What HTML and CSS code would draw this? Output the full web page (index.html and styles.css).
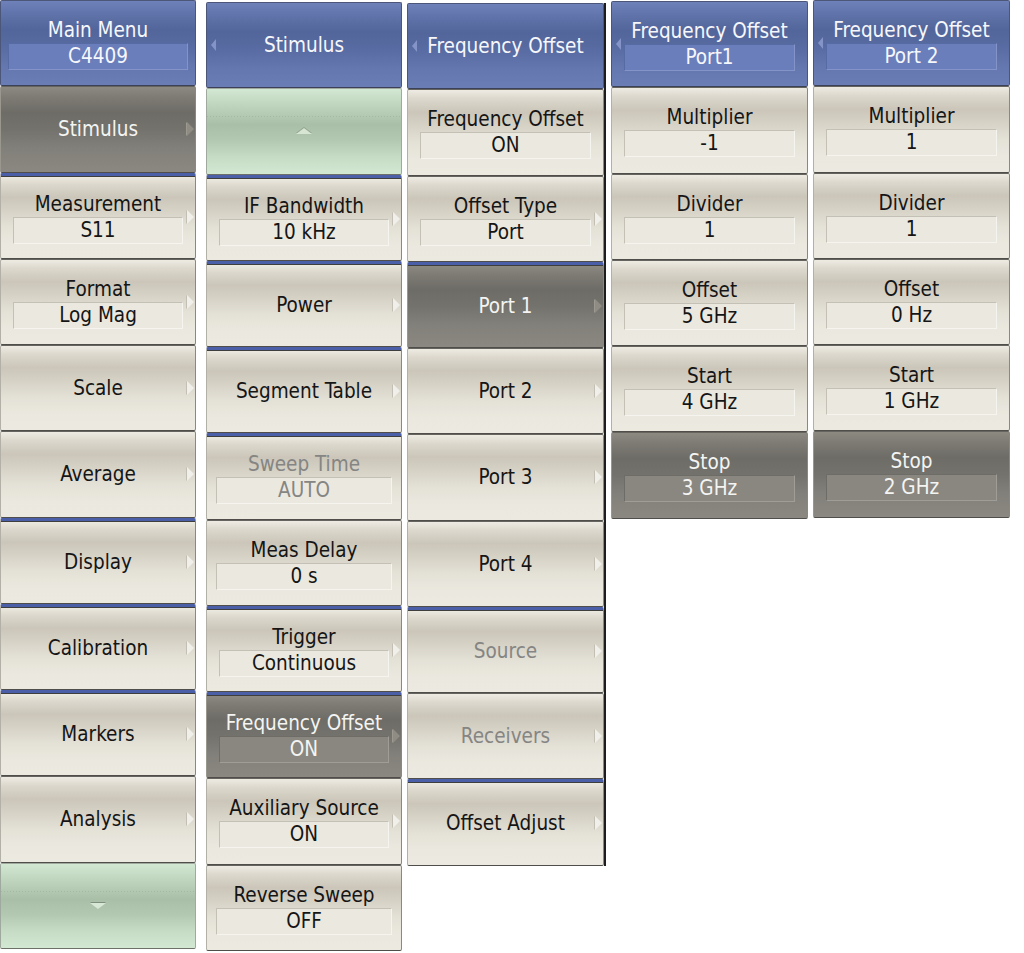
FILE: index.html
```html
<!DOCTYPE html>
<html>
<head>
<meta charset="utf-8">
<title>Menu</title>
<link rel="stylesheet" href="styles.css">
</head>
<body>
<div class="screen">
  <div class="col c1">
    <div class="btn hdr tight"><div class="body"><div class="lbl">Main Menu</div><div class="val">C4409</div></div></div>
    <div class="btn dark"><div class="body"><div class="lbl">Stimulus</div></div><span class="ra"></span></div>
    <div class="btn sep"><div class="body"><div class="lbl">Measurement</div><div class="val">S11</div></div><span class="ra"></span></div>
    <div class="btn"><div class="body"><div class="lbl">Format</div><div class="val">Log Mag</div></div><span class="ra"></span></div>
    <div class="btn"><div class="body"><div class="lbl">Scale</div></div><span class="ra"></span></div>
    <div class="btn"><div class="body"><div class="lbl">Average</div></div><span class="ra"></span></div>
    <div class="btn sep"><div class="body"><div class="lbl">Display</div></div><span class="ra"></span></div>
    <div class="btn sep"><div class="body"><div class="lbl">Calibration</div></div><span class="ra"></span></div>
    <div class="btn sep"><div class="body"><div class="lbl">Markers</div></div><span class="ra"></span></div>
    <div class="btn"><div class="body"><div class="lbl">Analysis</div></div><span class="ra"></span></div>
    <div class="btn scroll"><div class="body"><span class="tri-down"></span></div></div>
  </div>

  <div class="col c2">
    <div class="btn hdr"><span class="la"></span><div class="body"><div class="lbl">Stimulus</div></div></div>
    <div class="btn scroll"><div class="body"><span class="tri-up"></span></div></div>
    <div class="btn sep"><div class="body"><div class="lbl">IF Bandwidth</div><div class="val">10 kHz</div></div><span class="ra"></span></div>
    <div class="btn sep"><div class="body"><div class="lbl">Power</div></div><span class="ra"></span></div>
    <div class="btn sep"><div class="body"><div class="lbl">Segment Table</div></div><span class="ra"></span></div>
    <div class="btn sep wide dis"><div class="body"><div class="lbl">Sweep Time</div><div class="val">AUTO</div></div></div>
    <div class="btn wide"><div class="body"><div class="lbl">Meas Delay</div><div class="val">0 s</div></div></div>
    <div class="btn sep"><div class="body"><div class="lbl">Trigger</div><div class="val">Continuous</div></div><span class="ra"></span></div>
    <div class="btn sep dark"><div class="body"><div class="lbl">Frequency Offset</div><div class="val">ON</div></div><span class="ra"></span></div>
    <div class="btn"><div class="body"><div class="lbl">Auxiliary Source</div><div class="val">ON</div></div><span class="ra"></span></div>
    <div class="btn wide"><div class="body"><div class="lbl">Reverse Sweep</div><div class="val">OFF</div></div></div>
  </div>

  <div class="col c3">
    <div class="btn hdr"><span class="la"></span><div class="body"><div class="lbl">Frequency Offset</div></div></div>
    <div class="btn"><div class="body"><div class="lbl">Frequency Offset</div><div class="val">ON</div></div></div>
    <div class="btn"><div class="body"><div class="lbl">Offset Type</div><div class="val">Port</div></div><span class="ra"></span></div>
    <div class="btn sep dark"><div class="body"><div class="lbl">Port 1</div></div><span class="ra"></span></div>
    <div class="btn"><div class="body"><div class="lbl">Port 2</div></div><span class="ra"></span></div>
    <div class="btn"><div class="body"><div class="lbl">Port 3</div></div><span class="ra"></span></div>
    <div class="btn"><div class="body"><div class="lbl">Port 4</div></div><span class="ra"></span></div>
    <div class="btn sep dis"><div class="body"><div class="lbl">Source</div></div><span class="ra"></span></div>
    <div class="btn dis"><div class="body"><div class="lbl">Receivers</div></div><span class="ra"></span></div>
    <div class="btn sep"><div class="body"><div class="lbl">Offset Adjust</div></div><span class="ra"></span></div>
  </div>

  <div class="col c4">
    <div class="btn hdr"><span class="la"></span><div class="body"><div class="lbl">Frequency Offset</div><div class="val">Port1</div></div></div>
    <div class="btn"><div class="body"><div class="lbl">Multiplier</div><div class="val">-1</div></div></div>
    <div class="btn"><div class="body"><div class="lbl">Divider</div><div class="val">1</div></div></div>
    <div class="btn"><div class="body"><div class="lbl">Offset</div><div class="val">5 GHz</div></div></div>
    <div class="btn"><div class="body"><div class="lbl">Start</div><div class="val">4 GHz</div></div></div>
    <div class="btn dark"><div class="body"><div class="lbl">Stop</div><div class="val">3 GHz</div></div></div>
  </div>

  <div class="col c5">
    <div class="btn hdr"><span class="la"></span><div class="body"><div class="lbl">Frequency Offset</div><div class="val">Port 2</div></div></div>
    <div class="btn"><div class="body"><div class="lbl">Multiplier</div><div class="val">1</div></div></div>
    <div class="btn"><div class="body"><div class="lbl">Divider</div><div class="val">1</div></div></div>
    <div class="btn"><div class="body"><div class="lbl">Offset</div><div class="val">0 Hz</div></div></div>
    <div class="btn"><div class="body"><div class="lbl">Start</div><div class="val">1 GHz</div></div></div>
    <div class="btn dark"><div class="body"><div class="lbl">Stop</div><div class="val">2 GHz</div></div></div>
  </div>
</div>
</body>
</html>
```

FILE: styles.css
```css
html, body {
  margin: 0;
  padding: 0;
  background: #ffffff;
}

body {
  font-family: "DejaVu Sans Condensed", "DejaVu Sans", sans-serif;
  font-size: 20.5px;
  color: #151515;
}

.screen {
  display: flex;
  align-items: flex-start;
  width: 1024px;
  height: 953px;
  overflow: hidden;
}

.col {
  display: flex;
  flex-direction: column;
  width: 196px;
  flex: none;
}

.c1 { margin-top: 0; }
.c2 { margin-left: 10px; margin-top: 2px; }
.c3 { margin-left: 5px; margin-top: 3px; width: 197px; border-right: 2px solid #1d1d1d; }
.c4 { margin-left: 5px; margin-top: 1px; width: 197px; }
.c5 { margin-left: 5px; margin-top: 0; width: 197px; }

.btn {
  height: 86.25px;
  box-sizing: border-box;
  border: 1px solid #8a8881;
  border-top-color: #65645e;
  border-bottom-color: #4f4e4a;
  border-left-color: #b3b0a7;
  border-radius: 2px;
  display: grid;
  grid-template-columns: 12px 1fr 12px;
  align-items: center;
  background: linear-gradient(to bottom,
    #eeebe3 0%,
    #dcd8cd 10%,
    #cbc6b9 26%,
    #d6d2c6 42%,
    #e4e1d7 62%,
    #ebe8df 82%,
    #ece9e1 100%);
  color: #151515;
}

.btn.wide { grid-template-columns: 9px 1fr 9px; }
.btn.tight { grid-template-columns: 7px 1fr 7px; }

.body {
  grid-column: 2;
  grid-row: 1;
  display: flex;
  flex-direction: column;
  align-items: stretch;
  text-align: center;
}

.lbl {
  line-height: 24px;
  white-space: nowrap;
}

.lbl:not(:last-child) {
  margin-top: 2px;
}

.val {
  margin-top: 1px;
  height: 27px;
  box-sizing: border-box;
  line-height: 25px;
  border: 1px solid #c4c0b5;
  border-right-color: #f6f4ef;
  border-bottom-color: #f6f4ef;
  background: #ebe8df;
  white-space: nowrap;
}

.sep {
  border-top: 3px solid #4b5fa8;
  box-shadow: inset 0 1px 0 #3e3e3c;
}

/* disabled */
.dis { color: #858583; }

/* selected dark */
.dark {
  background: linear-gradient(to bottom,
    #8d8a82 0%,
    #7d7b74 12%,
    #6e6c66 30%,
    #74726c 50%,
    #82807a 72%,
    #8b8881 100%);
  color: #f4f4f2;
  border-left-color: #9a978f;
}
.dark .val {
  background: #8a8780;
  border-color: #6e6c66;
  border-right-color: #a09d96;
  border-bottom-color: #a09d96;
}

/* blue header */
.hdr {
  background: linear-gradient(to bottom,
    #6f81b9 0%,
    #6174ab 14%,
    #53669b 34%,
    #586ba2 55%,
    #6477ae 78%,
    #6a7db5 100%);
  color: #f6f7fb;
  border-color: #4b5679;
  border-bottom-color: #3b4257;
}
.hdr .val {
  background: #6a7ebb;
  border-color: #566aa3;
  border-right-color: #8494c8;
  border-bottom-color: #8494c8;
}

/* green scroll */
.scroll {
  background:
    repeating-linear-gradient(to right, rgba(120, 140, 118, 0.25) 0 1px, transparent 1px 3px) 0 27px / 100% 1px no-repeat,
    linear-gradient(to bottom,
      #d3e8d2 0%,
      #c1d6bf 18%,
      #a9bfa7 42%,
      #b2c8b0 60%,
      #c7dcc5 80%,
      #d2e8d2 100%);
  border-color: #9fa99e;
  border-bottom-color: #6d6f69;
}
.scroll .body { align-items: center; }

.tri-up {
  width: 0;
  height: 0;
  border-left: 8px solid transparent;
  border-right: 8px solid transparent;
  border-bottom: 6px solid #d6e6d3;
  filter: drop-shadow(0 -1px 0 #8fa08d);
}
.tri-down {
  width: 0;
  height: 0;
  border-left: 8px solid transparent;
  border-right: 8px solid transparent;
  border-top: 6px solid #d8e8d6;
  filter: drop-shadow(0 -1px 0 #7e8f7c);
}

/* arrows */
.ra {
  grid-column: 3;
  grid-row: 1;
  justify-self: end;
  margin-right: 1px;
  width: 0;
  height: 0;
  border-top: 7px solid transparent;
  border-bottom: 7px solid transparent;
  border-left: 7px solid #f1efe9;
  filter: drop-shadow(-1px 0 0 #c3bfb4);
}
.dark .ra {
  border-left-color: #8f8c84;
  filter: drop-shadow(-1px 0 0 #9c9991);
}

.la {
  grid-column: 1;
  grid-row: 1;
  justify-self: start;
  margin-left: 4px;
  width: 0;
  height: 0;
  border-top: 6px solid transparent;
  border-bottom: 6px solid transparent;
  border-right: 5px solid #8494c8;
}
```
